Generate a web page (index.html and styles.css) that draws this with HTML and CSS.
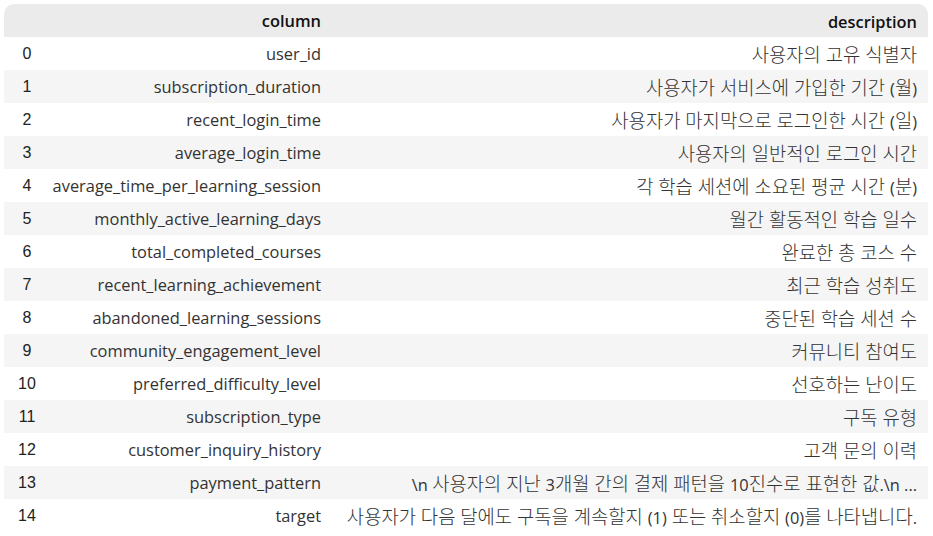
FILE: index.html
```html
<!DOCTYPE html>
<html lang="ko">
<head>
<meta charset="utf-8">
<link rel="stylesheet" href="styles.css">
</head>
<body>
<table class="df">
  <thead>
    <tr><th class="idx"></th><th class="col">column</th><th class="desc"><span class="lat">description</span></th></tr>
  </thead>
  <tbody>
    <tr><td class="idx">0</td><td class="col">user_id</td><td class="desc">사용자의 고유 식별자</td></tr>
    <tr><td class="idx">1</td><td class="col">subscription_duration</td><td class="desc">사용자가 서비스에 가입한 기간 <span class="lat">(</span>월<span class="lat">)</span></td></tr>
    <tr><td class="idx">2</td><td class="col">recent_login_time</td><td class="desc">사용자가 마지막으로 로그인한 시간 <span class="lat">(</span>일<span class="lat">)</span></td></tr>
    <tr><td class="idx">3</td><td class="col">average_login_time</td><td class="desc">사용자의 일반적인 로그인 시간</td></tr>
    <tr><td class="idx">4</td><td class="col">average_time_per_learning_session</td><td class="desc">각 학습 세션에 소요된 평균 시간 <span class="lat">(</span>분<span class="lat">)</span></td></tr>
    <tr><td class="idx">5</td><td class="col">monthly_active_learning_days</td><td class="desc">월간 활동적인 학습 일수</td></tr>
    <tr><td class="idx">6</td><td class="col">total_completed_courses</td><td class="desc">완료한 총 코스 수</td></tr>
    <tr><td class="idx">7</td><td class="col">recent_learning_achievement</td><td class="desc">최근 학습 성취도</td></tr>
    <tr><td class="idx">8</td><td class="col">abandoned_learning_sessions</td><td class="desc">중단된 학습 세션 수</td></tr>
    <tr><td class="idx">9</td><td class="col">community_engagement_level</td><td class="desc">커뮤니티 참여도</td></tr>
    <tr><td class="idx">10</td><td class="col">preferred_difficulty_level</td><td class="desc">선호하는 난이도</td></tr>
    <tr><td class="idx">11</td><td class="col">subscription_type</td><td class="desc">구독 유형</td></tr>
    <tr><td class="idx">12</td><td class="col">customer_inquiry_history</td><td class="desc">고객 문의 이력</td></tr>
    <tr><td class="idx">13</td><td class="col">payment_pattern</td><td class="desc"><span class="lat">\n </span>사용자의 지난 <span class="lat">3</span>개월 간의 결제 패턴을 <span class="lat">10</span>진수로 표현한 값<span class="lat">.\n ...</span></td></tr>
    <tr><td class="idx">14</td><td class="col">target</td><td class="desc">사용자가 다음 달에도 구독을 계속할지 <span class="lat">(1)</span> 또는 취소할지 <span class="lat">(0)</span>를 나타냅니다<span class="lat">.</span></td></tr>
  </tbody>
</table>
</body>
</html>
```

FILE: styles.css
```css
html, body {
  margin: 0;
  padding: 0;
  background: #ffffff;
}
body {
  padding: 4px;
}
.df {
  width: 924px;
  border-collapse: separate;
  border-spacing: 0;
  font-family: "Open Sans", "Noto Sans CJK KR", sans-serif;
  font-size: 16.4px;
  color: #333333;
}
.df th, .df td {
  height: 33px;
  padding: 0 11px 0 0;
  white-space: nowrap;
  box-sizing: border-box;
}
.df thead th {
  background: #ebebeb;
  font-weight: 600;
  color: #111111;
  text-align: right;
}
.df thead th:first-child {
  border-top-left-radius: 10px;
}
.df thead th:last-child {
  border-top-right-radius: 10px;
}
.df tbody tr:nth-child(even) td {
  background: #f5f5f5;
}
.df .idx {
  width: 46px;
  padding: 0;
  text-align: center;
  font-family: "Liberation Sans", sans-serif;
  font-size: 16px;
  color: #222222;
}
.df .col {
  width: 282px;
  text-align: right;
}
.df .desc {
  text-align: right;
  font-size: 18.8px;
  font-weight: 300;
}
.df .desc .lat {
  font-size: 16.4px;
  font-weight: 400;
}
.df thead .desc .lat {
  font-weight: 600;
}
```
